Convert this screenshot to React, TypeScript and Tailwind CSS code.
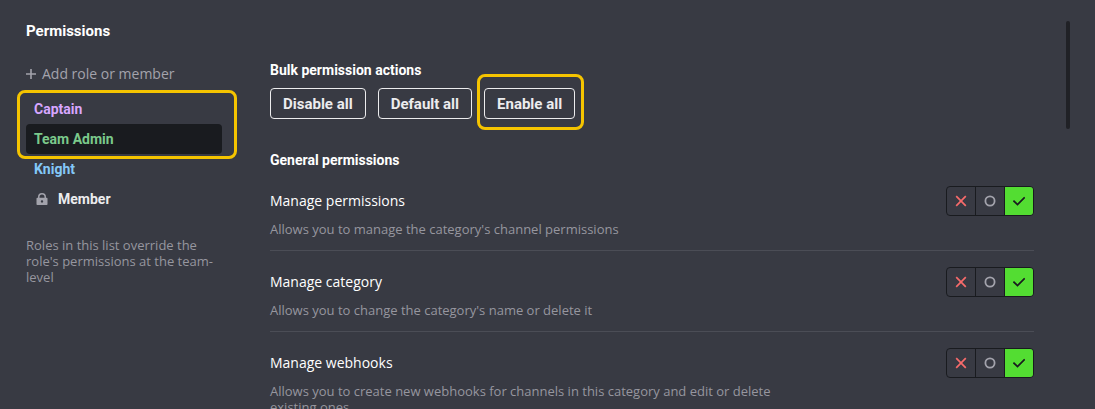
import { useState } from "react";
import clsx from "clsx";

type PermissionValue = "deny" | "default" | "allow";

const permissions = [
  {
    id: "manage-permissions",
    title: "Manage permissions",
    description: "Allows you to manage the category's channel permissions",
  },
  {
    id: "manage-category",
    title: "Manage category",
    description: "Allows you to change the category's name or delete it",
  },
  {
    id: "manage-webhooks",
    title: "Manage webhooks",
    description:
      "Allows you to create new webhooks for channels in this category and edit or delete existing ones",
  },
];

const options: { value: PermissionValue; label: string }[] = [
  { value: "deny", label: "Deny" },
  { value: "default", label: "Default" },
  { value: "allow", label: "Allow" },
];

function OptionIcon({ value }: { value: PermissionValue }) {
  if (value === "deny") {
    return (
      <svg className="size-3 text-[#f76b6b]" viewBox="0 0 12 12" fill="none" stroke="currentColor" strokeWidth={1.7}>
        <path d="M1.2 1.2l9.6 9.6M10.8 1.2L1.2 10.8" />
      </svg>
    );
  }
  if (value === "default") {
    return (
      <svg className="size-3 text-[#a3a3ac]" viewBox="0 0 12 12" fill="none" stroke="currentColor" strokeWidth={1.8}>
        <circle cx="6" cy="6" r="4.6" />
      </svg>
    );
  }
  return (
    <svg className="size-3" viewBox="0 0 12 12" fill="none" stroke="currentColor" strokeWidth={1.8}>
      <path d="M.4 5.6l4.1 4L11.7 2.3" />
    </svg>
  );
}

function PermissionToggle({
  name,
  title,
  value,
  onChange,
}: {
  name: string;
  title: string;
  value: PermissionValue;
  onChange: (value: PermissionValue) => void;
}) {
  return (
    <div
      role="radiogroup"
      aria-label={title}
      className="flex shrink-0 divide-x divide-[#191b1f] overflow-hidden rounded border border-[#191b1f]"
    >
      {options.map((option) => (
        <label
          key={option.value}
          className={clsx(
            "relative flex h-7 cursor-pointer items-center justify-center",
            option.value === "allow" ? "w-7" : "w-[29px]",
            value === option.value && option.value === "allow"
              ? "bg-[#53dd32] text-[#191b1f]"
              : "text-[#a3a3ac]",
          )}
        >
          <input
            type="radio"
            className="sr-only"
            name={name}
            aria-label={option.label}
            checked={value === option.value}
            onChange={() => onChange(option.value)}
          />
          <OptionIcon value={option.value} />
        </label>
      ))}
    </div>
  );
}

function Highlight({ className }: { className: string }) {
  return (
    <div
      className={clsx(
        "pointer-events-none absolute rounded-lg border-3 border-[#f5c400]",
        className,
      )}
    />
  );
}

function BulkButton({ label, onClick }: { label: string; onClick: () => void }) {
  return (
    <button
      type="button"
      onClick={onClick}
      className="h-[31px] cursor-pointer rounded border border-[#ececee] px-3 font-['Roboto',sans-serif] text-[15px] leading-5 font-bold text-[#ececee]"
    >
      {label}
    </button>
  );
}

function RoleList() {
  const [selected, setSelected] = useState("Team Admin");

  const roleButton = (name: string, color: string) => (
    <button
      type="button"
      onClick={() => setSelected(name)}
      className={clsx(
        "flex h-[30px] w-full items-center rounded px-2 font-['Roboto',sans-serif] text-sm font-bold",
        color,
        selected === name && "bg-[#191b1f]",
      )}
    >
      {name === "Member" && (
        <svg className="mr-2 size-4 text-[#a3a3ac]" viewBox="0 0 16 16" fill="currentColor">
          <path
            fillRule="evenodd"
            d="M4 6.8V6a4 4 0 018 0v.8h.7c.5 0 .8.3.8.8v5.6c0 .5-.3.8-.8.8H3.3c-.5 0-.8-.3-.8-.8V7.6c0-.5.3-.8.8-.8zm1.500 0h5V6a2.500 2.500 0 00-5 0zM8 9.200a1.200 1.200 0 100 2.400 1.200 1.200 0 000-2.400z"
          />
        </svg>
      )}
      {name}
    </button>
  );

  return (
    <div className="mt-2.5">
      <div className="relative">
        {roleButton("Captain", "text-[#d7a6ff]")}
        {roleButton("Team Admin", "text-[#7bc98b]")}
        <Highlight className="-top-1 -right-[15px] -bottom-[5px] -left-[9px]" />
      </div>
      {roleButton("Knight", "text-[#84c8f8]")}
      {roleButton("Member", "text-[#ececee]")}
    </div>
  );
}

export default function App() {
  const [values, setValues] = useState<Record<string, PermissionValue>>({
    "manage-permissions": "allow",
    "manage-category": "allow",
    "manage-webhooks": "allow",
  });

  const setAll = (value: PermissionValue) =>
    setValues(Object.fromEntries(permissions.map((p) => [p.id, value])));

  return (
    <div className="flex h-screen overflow-hidden bg-[#383a43] font-['Open_Sans','Noto_Sans',sans-serif] text-white">
      <aside className="ml-[26px] w-[196px] shrink-0 pt-[21px]">
        <h1 className="font-['Roboto',sans-serif] text-[15px] leading-5 font-bold">Permissions</h1>
        <button
          type="button"
          className="mt-[23px] flex h-5 items-center gap-1.5 text-sm text-[#a3a3ac]"
        >
          <svg className="size-2.5" viewBox="0 0 10 10" stroke="currentColor" strokeWidth={1.6}>
            <path d="M5 0v10M0 5h10" />
          </svg>
          Add role or member
        </button>
        <RoleList />
        <p className="mt-[23px] text-[13px] leading-4 text-[#96969f]">
          Roles in this list override the role's permissions at the team-level
        </p>
      </aside>

      <main className="ml-12 min-w-0 flex-1 pt-[60px]">
        <h2 className="font-['Roboto',sans-serif] text-sm leading-5 font-bold">
          Bulk permission actions
        </h2>
        <div className="mt-2 flex gap-3">
          <BulkButton label="Disable all" onClick={() => setAll("deny")} />
          <BulkButton label="Default all" onClick={() => setAll("default")} />
          <div className="relative">
            <BulkButton label="Enable all" onClick={() => setAll("allow")} />
            <Highlight className="-top-3.5 -right-[9px] -bottom-[11px] -left-[7px]" />
          </div>
        </div>

        <h2 className="mt-[31px] font-['Roboto',sans-serif] text-sm leading-5 font-bold">
          General permissions
        </h2>
        {permissions.map((permission) => (
          <section key={permission.id} className="border-b border-[#4b4d56] pt-4 pb-[13px]">
            <div className="flex h-[30px] items-center justify-between">
              <h3 className="text-sm font-medium">{permission.title}</h3>
              <PermissionToggle
                name={permission.id}
                title={permission.title}
                value={values[permission.id]}
                onChange={(value) => setValues({ ...values, [permission.id]: value })}
              />
            </div>
            <p className="mt-[5px] max-w-[520px] text-[13px] leading-4 text-[#96969f]">
              {permission.description}
            </p>
          </section>
        ))}
      </main>

      {/* scroll thumb */}
      <div className="mt-[21px] mr-[25px] ml-8 h-[108px] w-1 shrink-0 rounded-full bg-[#202126]" />
    </div>
  );
}
